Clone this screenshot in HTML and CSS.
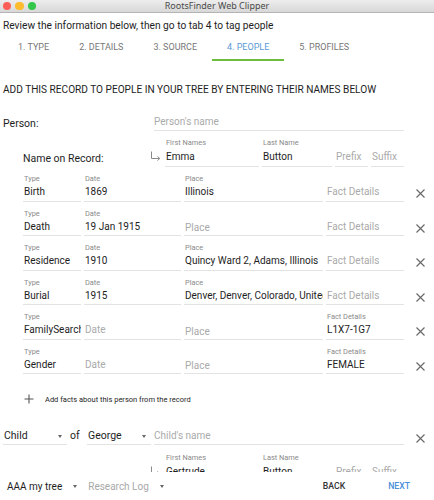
FILE: index.html
```html
<!DOCTYPE html>
<html lang="en">
<head>
<meta charset="utf-8">
<title>RootsFinder Web Clipper</title>
<link rel="stylesheet" href="styles.css">
</head>
<body>
<div class="window">
  <header class="titlebar">
    <div class="lights"><span class="light red"></span><span class="light yellow"></span><span class="light green"></span></div>
    <div class="title">RootsFinder Web Clipper</div>
    <div></div>
  </header>

  <main class="content">
    <p class="intro">Review the information below, then go to tab 4 to tag people</p>
    <nav class="tabs">
      <span class="tab">1. TYPE</span>
      <span class="tab">2. DETAILS</span>
      <span class="tab">3. SOURCE</span>
      <span class="tab active">4. PEOPLE</span>
      <span class="tab">5. PROFILES</span>
    </nav>

    <h2 class="heading">ADD THIS RECORD TO PEOPLE IN YOUR TREE BY ENTERING THEIR NAMES BELOW</h2>

    <div class="person-row">
      <div class="row-label">Person:</div>
      <div class="field"><div class="value placeholder">Person's name</div></div>
    </div>

    <div class="name-row">
      <div class="name-label">Name on Record:</div>
      <div class="arrow"><svg width="11" height="10" viewBox="0 0 11 10"><path d="M1.5 0.5V7.5H9.5M7.5 5.5L9.8 7.5L7.5 9.5" fill="none" stroke="#8a8a8a" stroke-width="1"/></svg></div>
      <div class="field"><div class="label">First Names</div><div class="value">Emma</div></div>
      <div class="field"><div class="label">Last Name</div><div class="value">Button</div></div>
      <div class="field"><div class="label"></div><div class="value placeholder">Prefix</div></div>
      <div class="field"><div class="label"></div><div class="value placeholder">Suffix</div></div>
    </div>

    <div class="facts">
      <div class="fact">
        <div class="field"><div class="label">Type</div><div class="value">Birth</div></div>
        <div class="field"><div class="label">Date</div><div class="value">1869</div></div>
        <div class="field"><div class="label">Place</div><div class="value">Illinois</div></div>
        <div class="field"><div class="label"></div><div class="value placeholder">Fact Details</div></div>
        <div class="remove"><svg width="9" height="9" viewBox="0 0 9 9"><path d="M0.5 0.5L8.5 8.5M8.5 0.5L0.5 8.5" stroke="#666" stroke-width="1.1"/></svg></div>
      </div>
      <div class="fact">
        <div class="field"><div class="label">Type</div><div class="value">Death</div></div>
        <div class="field"><div class="label">Date</div><div class="value">19 Jan 1915</div></div>
        <div class="field"><div class="label"></div><div class="value placeholder low">Place</div></div>
        <div class="field"><div class="label"></div><div class="value placeholder">Fact Details</div></div>
        <div class="remove"><svg width="9" height="9" viewBox="0 0 9 9"><path d="M0.5 0.5L8.5 8.5M8.5 0.5L0.5 8.5" stroke="#666" stroke-width="1.1"/></svg></div>
      </div>
      <div class="fact">
        <div class="field"><div class="label">Type</div><div class="value">Residence</div></div>
        <div class="field"><div class="label">Date</div><div class="value">1910</div></div>
        <div class="field"><div class="label">Place</div><div class="value">Quincy Ward 2, Adams, Illinois</div></div>
        <div class="field"><div class="label"></div><div class="value placeholder">Fact Details</div></div>
        <div class="remove"><svg width="9" height="9" viewBox="0 0 9 9"><path d="M0.5 0.5L8.5 8.5M8.5 0.5L0.5 8.5" stroke="#666" stroke-width="1.1"/></svg></div>
      </div>
      <div class="fact">
        <div class="field"><div class="label">Type</div><div class="value">Burial</div></div>
        <div class="field"><div class="label">Date</div><div class="value">1915</div></div>
        <div class="field"><div class="label">Place</div><div class="value">Denver, Denver, Colorado, United States</div></div>
        <div class="field"><div class="label"></div><div class="value placeholder">Fact Details</div></div>
        <div class="remove"><svg width="9" height="9" viewBox="0 0 9 9"><path d="M0.5 0.5L8.5 8.5M8.5 0.5L0.5 8.5" stroke="#666" stroke-width="1.1"/></svg></div>
      </div>
      <div class="fact">
        <div class="field"><div class="label">Type</div><div class="value">FamilySearch</div></div>
        <div class="field"><div class="label"></div><div class="value placeholder">Date</div></div>
        <div class="field"><div class="label"></div><div class="value placeholder low">Place</div></div>
        <div class="field"><div class="label">Fact Details</div><div class="value">L1X7-1G7</div></div>
        <div class="remove"><svg width="9" height="9" viewBox="0 0 9 9"><path d="M0.5 0.5L8.5 8.5M8.5 0.5L0.5 8.5" stroke="#666" stroke-width="1.1"/></svg></div>
      </div>
      <div class="fact">
        <div class="field"><div class="label">Type</div><div class="value">Gender</div></div>
        <div class="field"><div class="label"></div><div class="value placeholder">Date</div></div>
        <div class="field"><div class="label"></div><div class="value placeholder low">Place</div></div>
        <div class="field"><div class="label">Fact Details</div><div class="value">FEMALE</div></div>
        <div class="remove"><svg width="9" height="9" viewBox="0 0 9 9"><path d="M0.5 0.5L8.5 8.5M8.5 0.5L0.5 8.5" stroke="#666" stroke-width="1.1"/></svg></div>
      </div>
    </div>

    <div class="add-row">
      <svg width="10" height="10" viewBox="0 0 10 10"><path d="M5 0.5V9.5M0.5 5H9.5" stroke="#555" stroke-width="1.1"/></svg>
      <span>Add facts about this person from the record</span>
    </div>

    <div class="child-row">
      <div class="field select"><div class="value">Child<span class="caret"></span></div></div>
      <div class="of">of</div>
      <div class="field select"><div class="value">George<span class="caret"></span></div></div>
      <div class="field"><div class="value placeholder">Child's name</div></div>
      <div class="remove"><svg width="9" height="9" viewBox="0 0 9 9"><path d="M0.5 0.5L8.5 8.5M8.5 0.5L0.5 8.5" stroke="#666" stroke-width="1.1"/></svg></div>
    </div>

    <div class="name-row second">
      <div class="name-label"></div>
      <div class="arrow"><svg width="11" height="10" viewBox="0 0 11 10"><path d="M1.5 0.5V7.5H9.5M7.5 5.5L9.8 7.5L7.5 9.5" fill="none" stroke="#8a8a8a" stroke-width="1"/></svg></div>
      <div class="field"><div class="label">First Names</div><div class="value">Gertrude</div></div>
      <div class="field"><div class="label">Last Name</div><div class="value">Button</div></div>
      <div class="field"><div class="label"></div><div class="value placeholder">Prefix</div></div>
      <div class="field"><div class="label"></div><div class="value placeholder">Suffix</div></div>
    </div>
  </main>

  <footer class="footer">
    <div class="footer-select">AAA my tree<span class="caret"></span></div>
    <div class="footer-select muted">Research Log<span class="caret"></span></div>
    <div class="buttons">
      <span class="btn">BACK</span>
      <span class="btn primary">NEXT</span>
    </div>
  </footer>
</div>
</body>
</html>
```

FILE: styles.css
```css
* { box-sizing: border-box; }

body {
  margin: 0;
  background: #ffffff;
  color: #1e1e1e;
  font-family: Roboto, "Noto Sans", sans-serif;
}

.window {
  width: 434px;
  height: 500px;
  display: flex;
  flex-direction: column;
  overflow: hidden;
}

/* title bar */
.titlebar {
  flex: none;
  height: 13px;
  border-bottom: 1px solid #b4b4b4;
  background: linear-gradient(#ededed, #d8d8d8);
  display: grid;
  grid-template-columns: 1fr auto 1fr;
  align-items: center;
}
.lights {
  display: flex;
  gap: 4.3px;
  padding-left: 2.7px;
}
.light {
  width: 8.3px;
  height: 8.3px;
  border-radius: 50%;
}
.red { background: #fc5f57; }
.yellow { background: #fdbc2e; }
.green { background: #34c749; }
.title {
  font-family: "Noto Sans", sans-serif;
  font-size: 9px;
  line-height: 12px;
  color: #4a4a4a;
}

/* content */
.content {
  flex: none;
  height: 459px;
  overflow: hidden;
  padding-left: 3px;
}
.intro {
  margin: 5px 0 0;
  font-size: 10.2px;
  line-height: 16px;
  color: #1e1e1e;
}
.tabs {
  display: flex;
}
.tab {
  padding: 7px 15px 6px;
  font-size: 9px;
  line-height: 12px;
  color: #777;
  border-bottom: 2px solid transparent;
  white-space: nowrap;
}
.tab.active {
  color: #5a9ad6;
  border-bottom-color: #6cbc3e;
}
.heading {
  margin: 23px 0 0;
  font-size: 10.1px;
  line-height: 12px;
  font-weight: 400;
  color: #1e1e1e;
}

/* fields */
.field {
  border-bottom: 1px solid #e3e3e3;
  min-width: 0;
}
.label {
  height: 9px;
  font-size: 7.4px;
  line-height: 9px;
  color: #8a8a8a;
  white-space: nowrap;
  overflow: hidden;
}
.value {
  font-size: 10px;
  line-height: 14px;
  color: #1e1e1e;
  white-space: nowrap;
  overflow: hidden;
}
.placeholder { color: #aaa; }

.person-row {
  margin-top: 19px;
  display: grid;
  grid-template-columns: 148px 250px;
  column-gap: 3px;
  align-items: end;
}
.row-label {
  font-size: 10.5px;
  line-height: 14px;
}
.person-row .value { padding-bottom: 1px; }

.name-row {
  margin-top: 7px;
  margin-left: 20px;
  display: grid;
  grid-template-columns: 124px 12px 94px 70px 33px 33px;
  column-gap: 3px;
  align-items: end;
}
.name-row .label { margin-bottom: 3px; padding-left: 1px; }
.name-row .value { padding-bottom: 2px; padding-left: 1px; }
.name-label {
  font-size: 10.5px;
  line-height: 14px;
  margin-bottom: 1.5px;
}
.arrow {
  height: 14px;
  margin-bottom: 4px;
  display: flex;
  align-items: center;
}

.facts {
  margin-top: 7px;
  margin-left: 20px;
}
.fact {
  display: grid;
  grid-template-columns: 58px 97px 139px 78px 26px;
  column-gap: 3px;
  align-items: end;
}
.fact + .fact { margin-top: 7.1px; }
.fact .label { margin-bottom: 2px; padding-left: 1px; }
.fact .value { padding-bottom: 1.5px; padding-left: 1px; }
.fact .value.low { padding-top: 1.5px; padding-bottom: 0; }
.remove {
  height: 14px;
  margin-bottom: 1px;
  display: flex;
  align-items: center;
  justify-content: center;
}

.add-row {
  margin-top: 18px;
  margin-left: 21px;
  height: 14px;
  display: flex;
  align-items: center;
  gap: 11px;
  font-size: 7.5px;
  color: #1e1e1e;
}

.child-row {
  margin-top: 23px;
  display: grid;
  grid-template-columns: 64px 14px 64px 250px 26px;
  column-gap: 3px;
  align-items: end;
}
.child-row .value { padding-bottom: 1px; }
.select .value {
  display: flex;
  justify-content: space-between;
  align-items: center;
  padding-left: 1px;
  padding-right: 5px;
  font-size: 10.5px;
}
.caret {
  width: 0;
  height: 0;
  border-left: 2.8px solid transparent;
  border-right: 2.8px solid transparent;
  border-top: 3.2px solid #666;
}
.of {
  font-size: 10.5px;
  line-height: 14px;
  margin-bottom: 2px;
}
.child-row .remove { margin-bottom: 0; }
.name-row.second { margin-top: 7.5px; }

/* footer */
.footer {
  flex: none;
  height: 28px;
  display: flex;
  align-items: center;
  padding-left: 7px;
  padding-right: 10px;
  background: #fff;
}
.footer-select {
  display: flex;
  align-items: center;
  gap: 11px;
  margin-right: 11px;
  font-size: 10px;
  color: #1e1e1e;
}
.footer-select.muted { color: #a8a8a8; }
.buttons {
  margin-left: auto;
  display: flex;
  gap: 15px;
}
.btn {
  padding: 0 14px;
  font-size: 8.7px;
  font-weight: 500;
  color: #333;
}
.btn.primary { color: #4a90d9; }
```
